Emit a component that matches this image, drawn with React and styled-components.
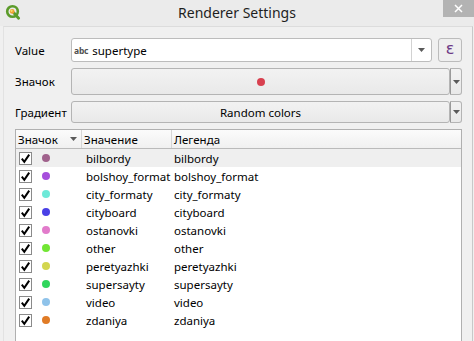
import styled, { createGlobalStyle } from "styled-components";

const GlobalStyle = createGlobalStyle`
  html, body {
    margin: 0;
    padding: 0;
    background: #f0f0f0;
  }
  * {
    box-sizing: border-box;
  }
`;

const categories = [
  { value: "bilbordy", color: "#a0628c" },
  { value: "bolshoy_format", color: "#a64fdc" },
  { value: "city_formaty", color: "#6ee9d8" },
  { value: "cityboard", color: "#4a40e6" },
  { value: "ostanovki", color: "#e27bcb" },
  { value: "other", color: "#72e634" },
  { value: "peretyazhki", color: "#d3d64f" },
  { value: "supersayty", color: "#30d65c" },
  { value: "video", color: "#8fc3ea" },
  { value: "zdaniya", color: "#e07b26" },
];

const Window = styled.div`
  width: 474px;
  height: 341px;
  overflow: hidden;
  display: flex;
  flex-direction: column;
  font-family: "Noto Sans", "Open Sans", sans-serif;
  font-size: 11.5px;
  color: #000;
  background: #f0f0f0;
`;

const TitleBar = styled.div`
  position: relative;
  height: 26px;
  flex: none;
  display: flex;
  align-items: center;
  justify-content: center;
  background: #ebebeb;
`;

const Logo = styled.svg`
  position: absolute;
  left: 5px;
  top: 4px;
`;

const Title = styled.div`
  font-size: 14px;
  color: #1e1e1e;
  margin-top: -2px;
`;

const CloseButton = styled.div`
  position: absolute;
  right: 0;
  top: 0;
  width: 31px;
  height: 17px;
  background: #b3b3b3;
  display: flex;
  align-items: center;
  justify-content: center;
`;

const Panel = styled.div`
  flex: 1;
  margin: 0 1px 0 3px;
  border-top: 1px solid #dcdcdc;
  border-left: 1px solid #e2e2e2;
  border-right: 1px solid #c8c8c8;
  padding: 11px 10px 0 11px;
  display: flex;
  flex-direction: column;
  gap: 6px;
  min-height: 0;
`;

const FormRow = styled.div`
  display: flex;
  align-items: center;
  height: ${(p) => p.$h}px;
`;

const Label = styled.div`
  width: 56px;
  flex: none;
`;

const Combo = styled.div`
  width: 361px;
  height: 100%;
  background: #fff;
  border: 1px solid #bcbcbc;
  border-radius: 3px;
  display: flex;
  align-items: center;
`;

const ComboText = styled.div`
  flex: 1;
  display: flex;
  align-items: center;
  gap: 4px;
  padding-left: 2px;
`;

const TypeTag = styled.span`
  font-size: 8.5px;
  font-weight: bold;
  color: #505050;
  letter-spacing: -0.2px;
`;

const ComboArrow = styled.div`
  width: 20px;
  height: 100%;
  border-left: 1px solid #d2d2d2;
  display: flex;
  align-items: center;
  justify-content: center;
`;

const ExprButton = styled.div`
  margin-left: 6px;
  width: 24px;
  height: 100%;
  border: 1px solid #bcbcbc;
  border-radius: 3px;
  background: #efefef;
  display: flex;
  align-items: center;
  justify-content: center;
  color: #6e3a86;
  font-family: "DejaVu Sans", sans-serif;
  font-size: 16px;
  line-height: 1;
  padding-bottom: 2px;
`;

const WideButton = styled.div`
  width: 379px;
  height: 100%;
  border: 1px solid #b4b4b4;
  border-radius: 3px;
  background: linear-gradient(#f2f2f2, #e9e9e9);
  display: flex;
  align-items: center;
  justify-content: center;
`;

const SideArrow = styled.div`
  width: 12px;
  height: 100%;
  border: 1px solid #b4b4b4;
  border-left-color: #9a9a9a;
  border-radius: 0 3px 3px 0;
  background: linear-gradient(#f2f2f2, #e9e9e9);
  display: flex;
  align-items: center;
  justify-content: center;
`;

const Dot = styled.span`
  display: inline-block;
  width: ${(p) => p.$size}px;
  height: ${(p) => p.$size}px;
  border-radius: 50%;
  background: ${(p) => p.$color};
`;

const Table = styled.div`
  flex: 1;
  width: 447px;
  background: #fff;
  border: 1px solid #b0b0b0;
  border-bottom: none;
  display: flex;
  flex-direction: column;
`;

const Columns = styled.div`
  display: grid;
  grid-template-columns: 66px 90px 1fr;
  align-items: center;
`;

const HeaderRow = styled(Columns)`
  height: 19px;
  background: linear-gradient(#fbfbfb, #f0f0f0);
  border-bottom: 1px solid #bababa;
`;

const HeaderCell = styled.div`
  height: 100%;
  display: flex;
  align-items: center;
  justify-content: space-between;
  padding: 0 4px 0 2px;
  border-right: 1px solid #d6d6d6;
  &:last-child {
    border-right: none;
  }
`;

const DataRow = styled(Columns)`
  height: 18px;
  background: ${(p) => (p.$current ? "#efefef" : "#fff")};
`;

const SymbolCell = styled.div`
  display: flex;
  align-items: center;
  padding-left: 3px;
  gap: 10px;
`;

const Check = styled.span`
  width: 13px;
  height: 13px;
  border: 1px solid #8a8a8a;
  background: #fff;
  display: flex;
  align-items: center;
  justify-content: center;
`;

const Cell = styled.div`
  padding-left: ${(p) => p.$pad}px;
  white-space: nowrap;
  overflow: hidden;
`;

const Triangle = ({ w = 7, h = 4, color = "#5a5a5a" }) => (
  <svg width={w} height={h} viewBox={`0 0 ${w} ${h}`}>
    <polygon points={`0,0 ${w},0 ${w / 2},${h}`} fill={color} />
  </svg>
);

const Tick = () => (
  <svg width="11" height="11" viewBox="0 0 11 11">
    <path d="M1.8 5.6 L4.3 8.8 L9.2 1.6" fill="none" stroke="#000" strokeWidth="2" />
  </svg>
);

export default function App() {
  return (
    <Window>
      <GlobalStyle />
      <TitleBar>
        <Logo width="16" height="16" viewBox="0 0 16 16">
          <circle cx="7.5" cy="7.5" r="5.3" fill="none" stroke="#5b9b2a" strokeWidth="2.6" />
          <path d="M9 9 L13.6 14.2" stroke="#5b9b2a" strokeWidth="2.8" strokeLinecap="round" />
          <circle cx="7.2" cy="7.4" r="2.4" fill="#f0a030" />
          <circle cx="6.6" cy="6.8" r="1.1" fill="#f7e06a" />
        </Logo>
        <Title>Renderer Settings</Title>
        <CloseButton>
          <svg width="9" height="9" viewBox="0 0 9 9">
            <path d="M1 1 L8 8 M8 1 L1 8" stroke="#fff" strokeWidth="1.5" />
          </svg>
        </CloseButton>
      </TitleBar>
      <Panel>
        <FormRow $h={24}>
          <Label>Value</Label>
          <Combo>
            <ComboText>
              <TypeTag>abc</TypeTag>
              <span>supertype</span>
            </ComboText>
            <ComboArrow>
              <Triangle />
            </ComboArrow>
          </Combo>
          <ExprButton>ε</ExprButton>
        </FormRow>
        <FormRow $h={27}>
          <Label>Значок</Label>
          <WideButton>
            <Dot $size={8} $color="#d8404f" />
          </WideButton>
          <SideArrow>
            <Triangle />
          </SideArrow>
        </FormRow>
        <FormRow $h={22}>
          <Label>Градиент</Label>
          <WideButton>Random colors</WideButton>
          <SideArrow>
            <Triangle />
          </SideArrow>
        </FormRow>
        <Table>
          <HeaderRow>
            <HeaderCell>
              <span>Значок</span>
              <Triangle />
            </HeaderCell>
            <HeaderCell>Значение</HeaderCell>
            <HeaderCell>Легенда</HeaderCell>
          </HeaderRow>
          {categories.map((c, i) => (
            <DataRow key={c.value} $current={i === 0}>
              <SymbolCell>
                <Check>
                  <Tick />
                </Check>
                <Dot $size={8} $color={c.color} />
              </SymbolCell>
              <Cell $pad={4}>{c.value}</Cell>
              <Cell $pad={2}>{c.value}</Cell>
            </DataRow>
          ))}
        </Table>
      </Panel>
    </Window>
  );
}
